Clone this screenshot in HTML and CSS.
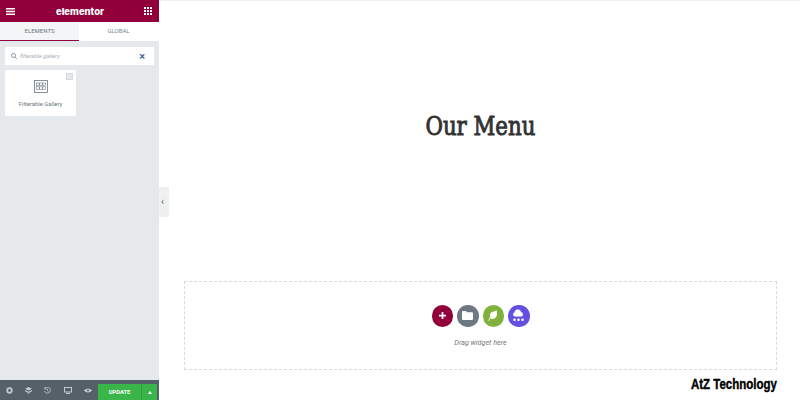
FILE: index.html
```html
<!DOCTYPE html>
<html lang="en">
<head>
  <meta charset="UTF-8">
  <title>Elementor editor</title>
  <link rel="stylesheet" href="styles.css">
</head>
<body>
  <aside class="panel">
    <header class="panel-header">
      <svg class="hamburger" width="9" height="7" viewBox="0 0 9 7"><path d="M0 0h9v1.400H0zM0 2.800h9v1.400H0zM0 5.600h9V7H0z" fill="#fff"/></svg>
      <span class="brand">elementor</span>
      <svg class="apps" width="8" height="8" viewBox="0 0 8 8" fill="#fff"><path d="M0 0h2v2H0zM3 0h2v2H3zM6 0h2v2H6zM0 3h2v2H0zM3 3h2v2H3zM6 3h2v2H6zM0 6h2v2H0zM3 6h2v2H3zM6 6h2v2H6z"/></svg>
    </header>
    <nav class="tabs">
      <span class="tab tab-active">ELEMENTS</span>
      <span class="tab">GLOBAL</span>
    </nav>
    <div class="panel-body">
      <div class="search">
        <svg width="6" height="6" viewBox="0 0 8 8" fill="none" stroke="#6d7882"><circle cx="3.300" cy="3.300" r="2.700"/><path d="M5.300 5.300 7.800 7.800"/></svg>
        <span class="search-text">filterable gallery</span>
        <span class="search-clear">×</span>
      </div>
      <div class="widget">
        <span class="widget-badge"></span>
        <svg class="widget-icon" width="14" height="13" viewBox="0 0 14 13" fill="none" stroke="#6d7882"><rect x=".5" y=".5" width="13" height="12" stroke-width=".8"/><rect x="2.600" y="3" width="2.600" height="2.600" stroke-width=".6"/><rect x="5.700" y="3" width="2.600" height="2.600" stroke-width=".6"/><rect x="8.800" y="3" width="2.600" height="2.600" stroke-width=".6"/><rect x="2.600" y="6.800" width="2.600" height="2.600" stroke-width=".6"/><rect x="5.700" y="6.800" width="2.600" height="2.600" stroke-width=".6"/><rect x="8.800" y="6.800" width="2.600" height="2.600" stroke-width=".6"/></svg>
        <span class="widget-name">Filterable Gallery</span>
      </div>
    </div>
    <footer class="panel-footer">
      <div class="tools">
        <svg width="7" height="7" viewBox="0 0 8 8"><circle cx="4" cy="4" r="2.600" fill="none" stroke="#c2cbd2" stroke-width="2"/></svg>
        <svg width="7" height="7" viewBox="0 0 8 8" fill="#c2cbd2"><path d="M4 0 8 2 4 4 0 2zM0 3.400 4 5.400 8 3.400V4.800L4 6.800 0 4.800zM1 6 4 7.400 7 6 4 8z"/></svg>
        <svg width="7" height="7" viewBox="0 0 8 8" fill="none" stroke="#c2cbd2"><path d="M1.200 1.600A3.400 3.400 0 1 1 .7 4.600M.9.400v1.900h1.900M4 2.200V4l1.200.8"/></svg>
        <svg width="8" height="7" viewBox="0 0 8 7" fill="none" stroke="#c2cbd2"><rect x=".5" y=".5" width="7" height="4.500"/><path d="M2 6.500h4"/></svg>
        <svg width="8" height="5" viewBox="0 0 8 5"><path d="M0 2.500C2 0 6 0 8 2.500 6 5 2 5 0 2.500z" fill="#c2cbd2"/><circle cx="4" cy="2.500" r="1" fill="#556068"/></svg>
      </div>
      <button class="update">UPDATE</button>
      <button class="update-more"><span class="caret"></span></button>
    </footer>
  </aside>

  <span class="collapse"><span class="collapse-arrow">‹</span></span>

  <main class="canvas">
    <h1 class="title"><span class="title-text">Our Menu</span></h1>
    <section class="dropzone">
      <div class="actions">
        <span class="action action-add">
          <svg width="7" height="7" viewBox="0 0 8 8"><path d="M3 0h2v3h3v2H5v3H3V5H0V3h3z" fill="#fff"/></svg>
        </span>
        <span class="action action-folder">
          <svg width="11" height="9" viewBox="0 0 11 9"><path d="M0 1a1 1 0 0 1 1-1h3l1 1.300h5a1 1 0 0 1 1 1V8a1 1 0 0 1-1 1H1a1 1 0 0 1-1-1z" fill="#fff"/></svg>
        </span>
        <span class="action action-leaf">
          <svg width="10" height="11" viewBox="0 0 10 11"><path d="M8.500 0C10 4.500 8.500 9 4.500 9 3.500 9 2.700 8.700 2.200 8.200 1.600 9 1.300 10 1.300 11L.5 10.700C.7 9 1.300 7.800 2.500 6.800 1.200 4.500 2.500 2.500 4.800 1.800 6 1.400 7.500 1.300 8.500 0z" fill="#fff"/></svg>
        </span>
        <span class="action action-kit">
          <svg width="13" height="13" viewBox="0 0 13 13" fill="#fff"><path d="M6 .5a3 3 0 0 1 3 2.700 2.200 2.200 0 0 1 .5 4.300h-6.500a2.200 2.200 0 0 1-.3-4.300A3 3 0 0 1 6 .5z"/><circle cx="2.500" cy="10.800" r="1.300"/><circle cx="6.500" cy="10.800" r="1.300"/><circle cx="10.500" cy="10.800" r="1.300"/></svg>
        </span>
      </div>
      <p class="hint">Drag widget here</p>
    </section>
    <span class="watermark">AtZ Technology</span>
  </main>
</body>
</html>
```

FILE: styles.css
```css
html, body {
  margin: 0;
  padding: 0;
  height: 400px;
  overflow: hidden;
  background: #fff;
  font-family: 'Roboto', Arial, sans-serif;
}
body {
  display: flex;
  position: relative;
}
.panel {
  width: 159px;
  flex: none;
  display: flex;
  flex-direction: column;
  background: #e6e9ec;
}
.panel-header {
  height: 22px;
  background: #92003b;
  display: flex;
  align-items: center;
  justify-content: space-between;
  padding: 0 7px 0 6px;
}
.brand {
  color: #fff;
  font-family: 'Inter', sans-serif;
  font-weight: 800;
  font-size: 9.5px;
  margin-left: 1px;
}
.tabs {
  height: 19px;
  display: flex;
  background: #fff;
}
.tab {
  width: 79px;
  font-size: 6px;
  color: #7d8790;
  text-align: center;
  line-height: 18px;
}
.tab-active {
  background: #f3f5f6;
  border-bottom: 1.5px solid #92003b;
  color: #6d7882;
}
.panel-body {
  flex: 1;
  padding: 6px 5px;
}
.search {
  height: 18px;
  background: #fff;
  display: flex;
  align-items: center;
  padding: 0 9px 0 6px;
  gap: 3px;
}
.search-text {
  flex: 1;
  font-size: 5.8px;
  font-style: italic;
  color: #a4afb7;
}
.search-clear {
  font-size: 11px;
  font-weight: 700;
  line-height: 1;
  color: #3f6a9a;
}
.widget {
  position: relative;
  margin-top: 5px;
  width: 71px;
  height: 46px;
  background: #fff;
  border-radius: 2px;
  display: flex;
  flex-direction: column;
  align-items: center;
  padding-top: 10px;
  box-sizing: border-box;
}
.widget-badge {
  position: absolute;
  top: 3px;
  right: 3px;
  width: 5px;
  height: 5px;
  background: #e6e9ec;
  border: 1px solid #d5dadf;
}
.widget-name {
  margin-top: 8px;
  font-size: 5.9px;
  color: #6d7882;
}
.panel-footer {
  height: 20px;
  background: #556068;
  display: flex;
  align-items: flex-end;
  padding-right: 2px;
}
.tools {
  flex: 1;
  height: 20px;
  display: flex;
  align-items: center;
  justify-content: space-around;
}
.update {
  width: 43px;
  height: 16px;
  border: 0;
  padding: 0;
  background: #39b54a;
  color: #fff;
  font-family: inherit;
  font-size: 5.8px;
  font-weight: 700;
}
.update-more {
  width: 16px;
  height: 16px;
  border: 0;
  border-left: 1px solid #2f9c3e;
  padding: 0;
  background: #39b54a;
  display: flex;
  align-items: center;
  justify-content: center;
}
.caret {
  width: 0;
  height: 0;
  border: 2.5px solid transparent;
  border-top: 0;
  border-bottom: 3px solid #fff;
}
.collapse {
  position: absolute;
  left: 159px;
  top: 187px;
  width: 10px;
  height: 30px;
  background: #eef0f2;
  display: flex;
  align-items: center;
  padding-left: 2px;
  box-sizing: border-box;
}
.collapse-arrow {
  font-size: 10px;
  line-height: 1;
  color: #556068;
}
.canvas {
  flex: 1;
  position: relative;
  display: flex;
  flex-direction: column;
  padding: 0 23px 30px 25px;
  border-top: 1px solid #eee;
  box-sizing: border-box;
}
.title {
  flex: 1;
  margin: 108px 0 0;
  text-align: center;
  font-family: 'DejaVu Serif', serif;
  font-weight: 400;
  font-stretch: condensed;
  font-size: 26px;
  line-height: 34px;
  color: #333;
  -webkit-text-stroke: 0.9px #333;
}
.title-text {
  display: inline-block;
  transform: scaleX(0.91);
}
.dropzone {
  height: 89px;
  box-sizing: border-box;
  border: 1px dashed #d5dadf;
  display: flex;
  flex-direction: column;
  align-items: center;
  padding-top: 23px;
}
.actions {
  display: flex;
  gap: 4px;
}
.action {
  width: 21.5px;
  height: 21.5px;
  border-radius: 50%;
  display: flex;
  align-items: center;
  justify-content: center;
}
.action-add { background: #92003b; }
.action-folder { background: #6d7882; }
.action-leaf { background: #7fb13b; }
.action-kit { background: #6251e0; }
.hint {
  margin: 11px 0 0;
  font-size: 7.2px;
  font-style: italic;
  color: #777;
}
.watermark {
  position: absolute;
  left: 532px;
  top: 375px;
  font-family: 'Liberation Sans', Arial, sans-serif;
  font-weight: 700;
  font-size: 14px;
  color: #000;
  -webkit-text-stroke: 0.4px #000;
  white-space: nowrap;
  transform: scaleX(0.82);
  transform-origin: left center;
}
```
